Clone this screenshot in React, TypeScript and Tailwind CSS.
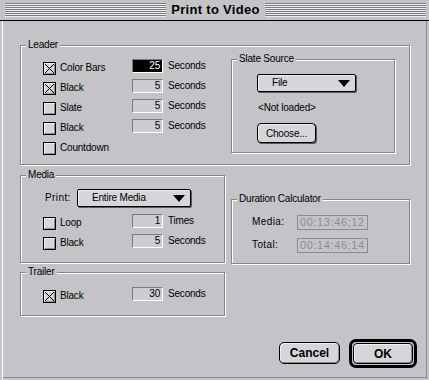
import React from "react";

const GRAY = "bg-[#c4c4c8]";

function Group({ title, className, children }: { title: string; className: string; children?: React.ReactNode }) {
  return (
    <div className={`relative border border-[#85858a] shadow-[1px_1px_0_#fff,inset_1px_1px_0_#fff] ${className}`}>
      <span className="absolute left-[5px] top-[-9px] bg-[#c4c4c8] px-[2px] leading-[16px]">{title}</span>
      {children}
    </div>
  );
}

function Check({ checked }: { checked?: boolean }) {
  return (
    <div className="mt-[3px] h-[13px] w-[13px] shrink-0 border border-black bg-[#d6d6da] shadow-[inset_1px_1px_0_#f2f2f2,inset_-1px_-1px_0_#8e8e92]">
      {checked && (
        <svg width="11" height="11" viewBox="0 0 11 11" className="block">
          <path d="M1 1L10 10M10 1L1 10" stroke="#000" strokeWidth="1" />
        </svg>
      )}
    </div>
  );
}

function Field({ value, active }: { value: string; active?: boolean }) {
  return (
    <div
      className={`h-[14px] w-[31px] border-l border-t border-b border-r border-l-[#7c7c80] border-t-[#7c7c80] border-b-white border-r-white pr-[2px] text-right leading-[12px] ${
        active ? "bg-black text-white" : "bg-[#cdcdd1]"
      }`}
    >
      {value}
    </div>
  );
}

function Row({ label, checked, value, unit, active }: { label: string; checked?: boolean; value?: string; unit?: string; active?: boolean }) {
  return (
    <div className="flex h-[20px] items-start">
      <div className="flex w-[89px] items-start">
        <Check checked={checked} />
        <span className="ml-[4px] mt-[1px] leading-[16px]">{label}</span>
      </div>
      {value && <Field value={value} active={active} />}
      {unit && <span className="ml-[5px] mt-[-1px] leading-[16px]">{unit}</span>}
    </div>
  );
}

function Popup({ label, className }: { label: string; className: string }) {
  return (
    <div className={`flex h-[18px] items-center justify-between rounded-[2px] border border-black bg-[#d6d6da] pl-[14px] pr-[5px] shadow-[1px_1px_0_#5a5a5e,inset_1px_1px_0_#eeeef0] ${className}`}>
      <span className="leading-[16px]">{label}</span>
      <svg width="12" height="7" viewBox="0 0 12 7">
        <path d="M0 0H12L6 7Z" fill="#000" />
      </svg>
    </div>
  );
}

function Stripes() {
  return <div className="h-[14px] flex-1 bg-[repeating-linear-gradient(to_bottom,#7e7e82_0px,#7e7e82_1px,#ececee_1px,#ececee_2px)]" />;
}

export default function App() {
  return (
    <div className={`flex h-[380px] w-[429px] flex-col overflow-hidden ${GRAY} font-['Liberation_Sans',Arial,sans-serif] text-[10px] tracking-[-0.2px] text-black`}>
      <div className="flex h-[21px] shrink-0 items-center gap-[5px] border-b border-black pb-[1px] pl-[5px] pr-[3px]">
        <Stripes />
        <span className="text-[13px] font-bold leading-[16px] tracking-[0.3px]">Print to Video</span>
        <Stripes />
      </div>

      <div className="flex-1 shadow-[inset_2px_0_0_#c4c4c8,inset_3px_0_0_#fff,inset_-2px_-2px_0_#c4c4c8,inset_-3px_-3px_0_#8a8a8e]">
        <Group title="Leader" className="ml-[20px] mt-[24px] flex h-[120px] w-[390px] items-start">
          <div className="w-[210px] pl-[22px] pt-[13px]">
            <Row label="Color Bars" checked value="25" unit="Seconds" active />
            <Row label="Black" checked value="5" unit="Seconds" />
            <Row label="Slate" value="5" unit="Seconds" />
            <Row label="Black" value="5" unit="Seconds" />
            <Row label="Countdown" />
          </div>
          <Group title="Slate Source" className="mt-[13px] h-[94px] w-[164px] pl-[25px] pt-[14px]">
            <Popup label="File" className="w-[99px]" />
            <div className="ml-[1px] mt-[8px] leading-[16px]">&lt;Not loaded&gt;</div>
            <div className="mt-[7px] flex h-[20px] w-[59px] items-center justify-center rounded-[4px] border border-black bg-[#d6d6da] shadow-[1px_1px_0_#5a5a5e,inset_1px_1px_0_#eeeef0]">
              Choose...
            </div>
          </Group>
        </Group>

        <div className="ml-[20px] mt-[10px] flex items-start">
          <div className="w-[205px]">
            <Group title="Media" className="h-[88px] w-[205px] pt-[13px]">
              <div className="flex items-center pl-[24px]">
                <span className="w-[32px] leading-[16px] tracking-[0.4px]">Print:</span>
                <Popup label="Entire Media" className="w-[114px]" />
              </div>
              <div className="mt-[7px] pl-[22px]">
                <Row label="Loop" value="1" unit="Times" />
                <Row label="Black" value="5" unit="Seconds" />
              </div>
            </Group>
            <Group title="Trailer" className="mt-[9px] h-[44px] w-[205px] pl-[22px] pt-[14px]">
              <Row label="Black" checked value="30" unit="Seconds" />
            </Group>
          </div>

          <Group title="Duration Calculator" className="ml-[6px] mt-[24px] flex h-[65px] w-[179px] flex-col gap-[7px] pl-[20px] pt-[14px]">
            <div className="flex items-center">
              <span className="w-[45px] leading-[16px] tracking-[0.4px]">Media:</span>
              <div className="h-[15px] w-[71px] border border-[#8c8c90] pl-[2px] text-[11px] leading-[13px] tracking-[0.6px] text-[#8c8c90]">00:13:46;12</div>
            </div>
            <div className="flex items-center">
              <span className="w-[45px] leading-[16px] tracking-[0.4px]">Total:</span>
              <div className="h-[15px] w-[71px] border border-[#8c8c90] pl-[2px] text-[11px] leading-[13px] tracking-[0.6px] text-[#8c8c90]">00:14:46;14</div>
            </div>
          </Group>
        </div>

        <div className="mt-[23px] flex items-start justify-end pr-[12px]">
          <div className="mt-[3px] flex h-[22px] w-[61px] items-center justify-center rounded-[5px] border border-black bg-[#d6d6da] text-[12px] font-bold tracking-normal shadow-[inset_-1px_-1px_0_#8a8a8e,inset_1px_1px_0_#f0f0f2]">
            Cancel
          </div>
          <div className="ml-[9px] h-[29px] w-[68px] rounded-[7px] border-[3px] border-black p-[1px]">
            <div className="flex h-full w-full items-center justify-center rounded-[4px] border border-black bg-[#d6d6da] text-[12px] font-bold tracking-normal shadow-[inset_-1px_-1px_0_#8a8a8e,inset_1px_1px_0_#f0f0f2]">
              OK
            </div>
          </div>
        </div>
      </div>
    </div>
  );
}
